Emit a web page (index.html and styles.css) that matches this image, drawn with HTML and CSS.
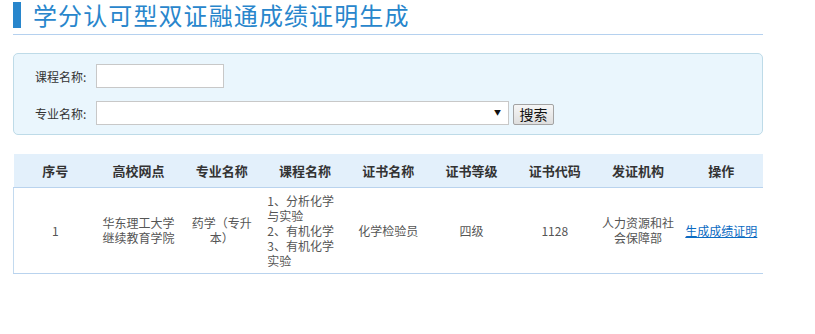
FILE: index.html
```html
<!DOCTYPE html>
<html lang="zh-CN">
<head>
  <meta charset="UTF-8" />
  <title>学分认可型双证融通成绩证明生成</title>
  <link rel="stylesheet" href="styles.css">
</head>
<body>
  <div class="page">
    <div class="page-head">
      <h1 class="page-title">学分认可型双证融通成绩证明生成</h1>
    </div>

    <form class="search-box">
      <div class="search-row">
        <label for="course">课程名称:</label>
        <input type="text" id="course" class="text-input" />
      </div>
      <div class="search-row">
        <label for="major">专业名称:</label>
        <span class="select-wrap">
          <select id="major" class="select-input">
            <option value=""></option>
          </select>
          <span class="select-arrow">▼</span>
        </span>
        <button type="button" class="btn-search">搜索</button>
      </div>
    </form>

    <table class="result-table">
      <thead>
        <tr>
          <th>序号</th>
          <th>高校网点</th>
          <th>专业名称</th>
          <th>课程名称</th>
          <th>证书名称</th>
          <th>证书等级</th>
          <th>证书代码</th>
          <th>发证机构</th>
          <th>操作</th>
        </tr>
      </thead>
      <tbody>
        <tr>
          <td>1</td>
          <td>华东理工大学继续教育学院</td>
          <td>药学（专升本）</td>
          <td class="course-cell">1、分析化学与实验<br>2、有机化学<br>3、有机化学实验</td>
          <td>化学检验员</td>
          <td>四级</td>
          <td>1128</td>
          <td>人力资源和社会保障部</td>
          <td><a href="#">生成成绩证明</a></td>
        </tr>
      </tbody>
    </table>
  </div>
</body>
</html>
```

FILE: styles.css
```css
* {
  box-sizing: border-box;
}

body {
  margin: 0;
  background: #fff;
  font-family: "Noto Sans CJK SC", "Liberation Sans", sans-serif;
  font-size: 12px;
  color: #555;
}

.page {
  width: 750px;
  margin-left: 13px;
}

.page-head {
  padding-top: 2px;
  padding-bottom: 6px;
  border-bottom: 1px solid #b5d1ef;
}

.page-title {
  margin: 0;
  height: 26px;
  line-height: 26px;
  border-left: 8px solid #2886cc;
  padding-left: 12px;
  font-size: 24px;
  font-weight: normal;
  letter-spacing: 1.1px;
  color: #2886cc;
}

.search-box {
  margin-top: 18px;
  height: 82px;
  padding: 10px 20px 0 21px;
  background: #eaf6fd;
  border: 1px solid #bedbe8;
  border-radius: 5px;
}

.search-row {
  display: flex;
  align-items: center;
  height: 24px;
  margin-bottom: 13px;
}

.search-row label {
  width: 61px;
  color: #333;
}

.text-input {
  width: 128px;
  height: 24px;
  border: 1px solid #c8c8c8;
  background: #fff;
  outline: none;
}

.select-wrap {
  position: relative;
  display: inline-block;
}

.select-input {
  appearance: none;
  width: 413px;
  height: 24px;
  border: 1px solid #c8c8c8;
  border-radius: 0;
  background: #fff;
  outline: none;
}

.select-arrow {
  position: absolute;
  right: 8px;
  top: 7px;
  font-size: 7px;
  line-height: 8px;
  color: #111;
  pointer-events: none;
}

.btn-search {
  margin-left: 4px;
  margin-top: 2px;
  width: 41px;
  height: 21px;
  padding: 0;
  border: 1px solid #a3a3a3;
  border-radius: 2px;
  background: linear-gradient(#f6f6f6, #dedede);
  font-family: inherit;
  font-size: 14px;
  line-height: 19px;
  color: #111;
  cursor: pointer;
}

.result-table {
  margin-top: 19px;
  width: 750px;
  border-collapse: collapse;
  table-layout: fixed;
}

.result-table th {
  height: 33px;
  background: #e3f0fb;
  border-bottom: 1px solid #b9d3ee;
  font-size: 13px;
  font-weight: bold;
  color: #333;
  text-align: center;
}

.result-table td {
  height: 86px;
  padding: 0 4px;
  border-bottom: 1px solid #b9d3ee;
  text-align: center;
  line-height: 15px;
}

.result-table td:first-child {
  border-left: 1px solid #c3daef;
}

.result-table td.course-cell {
  text-align: left;
}

.result-table a {
  color: #0b6bc2;
}
```
